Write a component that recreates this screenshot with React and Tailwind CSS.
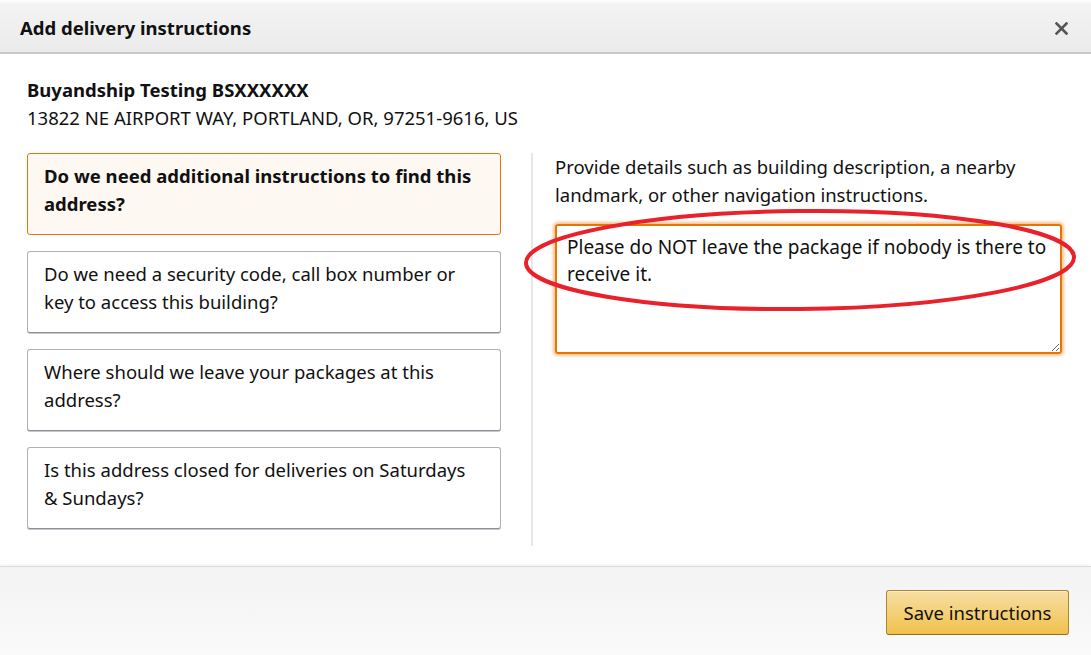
const QUESTIONS = [
  'Do we need additional instructions to find this address?',
  'Do we need a security code, call box number or key to access this building?',
  'Where should we leave your packages at this address?',
  'Is this address closed for deliveries on Saturdays & Sundays?',
];

export default function App() {
  return (
    <div className="relative w-[1091px] h-[655px] bg-white flex flex-col font-['Noto_Sans',sans-serif] text-[#111111] overflow-hidden">
      {/* Header */}
      <header className="h-[54px] shrink-0 flex items-center justify-between pl-5 pr-[22px] pt-[4px] border-b-2 border-[#c9c9c9] bg-[linear-gradient(to_bottom,#ffffff_0%,#f3f3f3_8%,#ebebeb_100%)]">
        <h1 className="text-[18.5px] font-bold leading-none">Add delivery instructions</h1>
        <button className="w-4 h-4 flex items-center justify-center text-[#555]">
          <svg width="13" height="13" viewBox="0 0 13 13" fill="none" stroke="currentColor" strokeWidth="2.6" strokeLinecap="square">
            <path d="M1.5 1.5l10 10M11.5 1.5l-10 10" />
          </svg>
        </button>
      </header>

      {/* Body */}
      <main className="flex-1 px-[27px] pt-[22px]">
        <div className="text-[18.5px] leading-[28px]">
          <p className="font-bold">Buyandship Testing BSXXXXXX</p>
          <p>13822 NE AIRPORT WAY, PORTLAND, OR, 97251-9616, US</p>
        </div>

        <div className="mt-[21px] flex">
          <div className="w-[474px] flex flex-col gap-4 pb-[17px]">
            {QUESTIONS.map((q, i) => (
              <button
                key={q}
                className={
                  i === 0
                    ? 'text-left h-[82px] pl-4 pr-6 pt-[6px] pb-[14px] rounded-[3px] border border-[#e77600] bg-[#fef8f2] text-[18.5px] leading-[28px] font-bold'
                    : 'text-left h-[82px] pl-4 pr-6 pt-[6px] pb-[14px] rounded-[3px] border border-[#adb1b8] border-b-[#8d9096] shadow-[0_1px_0_#c5c7cb] bg-white text-[18.5px] leading-[28px]'
                }
              >
                {q}
              </button>
            ))}
          </div>

          <div className="ml-[30px] w-[2px] bg-[#e7e7e7] self-stretch" />

          <div className="ml-[22px] w-[507px]">
            <p className="text-[18.5px] leading-[28px]">
              Provide details such as building description, a nearby landmark, or other navigation instructions.
            </p>
            <textarea
              className="mt-[15px] block w-full h-[130px] px-[10px] pt-[8px] rounded-[3px] border-2 border-[#e77600] shadow-[0_0_3px_2px_rgba(228,121,17,0.45)] text-[19px] leading-[27px] text-[#111] outline-none resize-y font-['Noto_Sans',sans-serif]"
              defaultValue="Please do NOT leave the package if nobody is there to receive it."
            />
          </div>
        </div>
      </main>

      {/* Footer */}
      <footer className="h-[89px] shrink-0 flex justify-end items-start pt-[23px] pr-[22px] border-t border-[#dcdcdc] shadow-[0_-1px_3px_rgba(0,0,0,0.06)] bg-[linear-gradient(to_bottom,#f3f3f3,#fafafa)]">
        <button className="h-[45px] w-[183px] rounded-[3px] border border-[#a88734] border-b-[#8c6e1f] bg-[linear-gradient(to_bottom,#f7dfa5,#f0c14b)] text-[18.5px] text-[#111] shadow-[inset_0_1px_0_rgba(255,255,255,0.4)]">
          Save instructions
        </button>
      </footer>

      {/* Red annotation ellipse */}
      <svg className="absolute left-[522px] top-[207px] pointer-events-none" width="556" height="106" viewBox="0 0 556 106">
        <ellipse cx="278" cy="53" rx="274" ry="49" fill="none" stroke="#e8212b" strokeWidth="4" transform="rotate(-0.6 278 53)" />
      </svg>
    </div>
  );
}
